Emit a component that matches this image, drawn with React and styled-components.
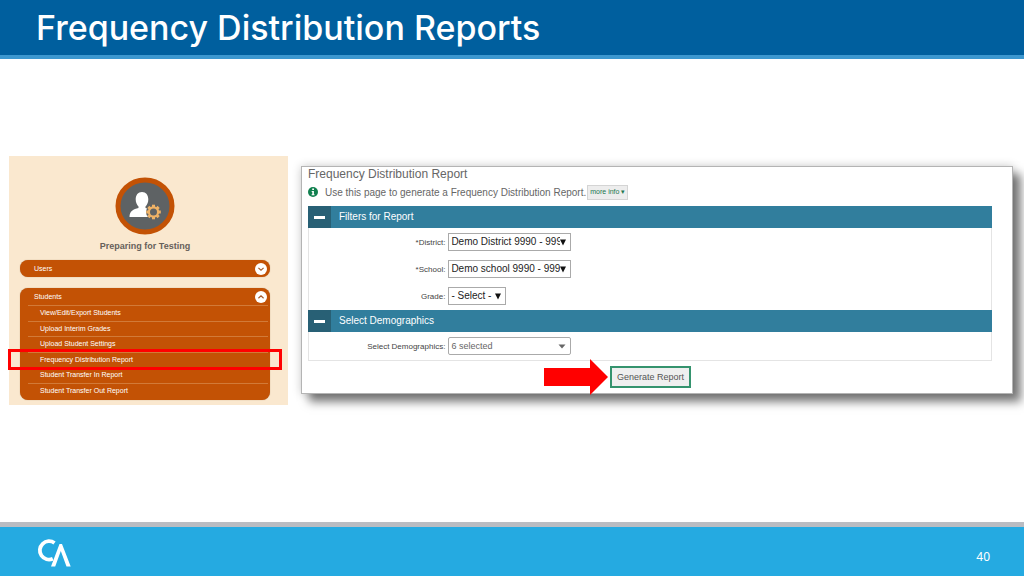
import {useState} from 'react'
import styled, {createGlobalStyle} from 'styled-components'

const GlobalStyle = createGlobalStyle`
  * {
    box-sizing: border-box;
  }
  body {
    margin: 0;
    background-color: #fff;
    font-family: "Liberation Sans", Arial, sans-serif;
  }
`
const Slide = styled.div`
  display: flex;
  flex-direction: column;
  min-height: 100vh;
  overflow: hidden;
`
const Header = styled.header`
  display: flex;
  align-items: center;
  height: 59px;
  padding: 0 36px;
  background-color: #005f9e;
  border-bottom: 4px solid #3c97cf;
`
const Heading = styled.h1`
  margin: 0;
  font-family: Inter, sans-serif;
  font-size: 34px;
  font-weight: 500;
  line-height: 40px;
  color: #fff;
`
const Main = styled.main`
  display: grid;
  grid-template-columns: 279fr 712fr;
  align-items: start;
  gap: 13px;
  flex: 1;
  padding: 97px 11px 0 9px;
`
const Sidebar = styled.nav`
  display: flex;
  flex-direction: column;
  align-items: center;
  padding: 21px 18px 5px 11px;
  background-color: #fae8cf;
`
const Avatar = styled.svg`
  display: block;
  width: 60px;
  height: 58px;
`
const SidebarTitle = styled.h2`
  margin: 5px 0 8px;
  font-size: 9px;
  font-weight: 700;
  line-height: 12px;
  color: #66605a;
`
const Group = styled.section`
  width: 100%;
  margin-bottom: ${(props) => props.$spaced && '11px'};
  border-radius: 8px;
  background-color: #c35205;
  box-shadow: 0 0 1px #a98260;
`
const GroupButton = styled.button`
  display: flex;
  align-items: center;
  justify-content: space-between;
  width: 100%;
  height: 17px;
  padding: 0 3px 0 14px;
  border: none;
  background: none;
  font-family: inherit;
  font-size: 7px;
  color: #fff;
`
const Toggle = styled.svg`
  width: 12px;
  height: 12px;
`
const Items = styled.ul`
  display: grid;
  grid-auto-rows: 1fr;
  min-height: 95px;
  margin: 0;
  padding: 0 2px 2px 8px;
  list-style: none;
`
const Item = styled.li`
  position: relative;
  display: flex;
  align-items: center;
  padding-left: 12px;
  border-top: 1px solid #d27a38;
`
const ItemLink = styled.a`
  font-size: 7px;
  line-height: 12px;
  color: #fff;
  text-decoration: none;
`
const Highlight = styled.span`
  position: absolute;
  inset: -4px -14px -3px -20px;
  border: 3px solid #f00;
  z-index: 1;
  pointer-events: none;
`
const Panel = styled.section`
  margin-top: 10px;
  padding: 0 20px 0 6px;
  border: 1px solid #b4b4b4;
  background-color: #fff;
  box-shadow:
    8px 8px 9px rgba(0, 0, 0, 0.5),
    0 0 9px rgba(0, 0, 0, 0.2);
`
const PanelTitle = styled.h2`
  margin: 0;
  font-size: 12px;
  font-weight: 400;
  line-height: 15px;
  color: #666;
`
const Intro = styled.div`
  display: flex;
  align-items: center;
  height: 20px;
  margin-bottom: 4px;
  font-size: 10px;
  color: #666;
`
const InfoIcon = styled.svg`
  width: 10px;
  height: 10px;
  margin-right: 7px;
`
const MoreInfo = styled.button`
  height: 15px;
  margin-left: 1px;
  padding: 0 2px;
  border: 1px solid #d4d4d4;
  background-color: #ededed;
  font-family: inherit;
  font-size: 7px;
  color: #21774f;
`
const Bar = styled.div`
  display: flex;
  align-items: stretch;
  height: 22px;
  background-color: #317e9d;
`
const Collapse = styled.button`
  display: flex;
  align-items: center;
  justify-content: center;
  width: 23px;
  padding: 0;
  border: none;
  background-color: #286075;
`
const Dash = styled.span`
  width: 11px;
  height: 3px;
  background-color: #fff;
`
const BarTitle = styled.h3`
  margin: 0;
  padding-left: 8px;
  font-size: 10px;
  font-weight: 400;
  line-height: 21px;
  color: #fff;
`
const Fields = styled.div`
  display: grid;
  gap: 9px;
  padding: 5px 0;
  border: solid #e4e4e4;
  border-width: 0 1px ${(props) => props.$last ? '1px' : '0'};
`
const Field = styled.div`
  display: grid;
  grid-template-columns: 20% 1fr;
  align-items: center;
  gap: 3px;
`
const Label = styled.label`
  font-size: 8px;
  text-align: right;
  color: #444;
`
const SelectBox = styled.div`
  display: grid;
  grid-template-columns: 1fr auto;
  align-items: center;
  width: ${(props) => props.$short ? '58px' : '123px'};
  height: 18px;
  padding: 0 4px 0 2px;
  border: 1px solid #aaa;
  border-radius: ${(props) => props.$muted ? '2px' : '0'};
  background-color: #fff;
`
const Select = styled.select`
  appearance: none;
  min-width: 0;
  width: 100%;
  padding: 0;
  border: none;
  background: none;
  font-family: inherit;
  font-size: ${(props) => props.$muted ? '9px' : '10px'};
  line-height: 14px;
  color: ${(props) => props.$muted ? '#666' : '#222'};
`
const Caret = styled.svg`
  width: ${(props) => props.$muted ? '8px' : '6px'};
  height: 7px;
  fill: ${(props) => props.$muted ? '#666' : '#111'};
`
const Actions = styled.div`
  display: flex;
  align-items: center;
  height: 32px;
  padding-left: 34.5%;
`
const Arrow = styled.svg`
  width: 64px;
  height: 36px;
  margin-right: 2px;
`
const Generate = styled.button`
  height: 22px;
  padding: 0 5px;
  border: 2px solid #35936e;
  background-color: #efefef;
  font-family: inherit;
  font-size: 9px;
  color: #555;
`
const Footer = styled.footer`
  display: flex;
  align-items: center;
  justify-content: space-between;
  height: 54px;
  padding: 0 34px 0 37px;
  border-top: 5px solid #b9bcc2;
  background-color: #25aae1;
`
const Logo = styled.svg`
  width: 34px;
  height: 30px;
  margin-top: 2px;
`
const PageNumber = styled.span`
  margin-top: 10px;
  font-family: "Noto Sans", sans-serif;
  font-size: 12px;
  line-height: 16px;
  color: #fff;
`

const links = [
    'View/Edit/Export Students',
    'Upload Interim Grades',
    'Upload Student Settings',
    'Frequency Distribution Report',
    'Student Transfer In Report',
    'Student Transfer Out Report',
]

const GroupHeader = ({title, open, onClick}) => (
    <GroupButton type="button" aria-expanded={open} onClick={onClick}>
        {title}
        <Toggle viewBox="0 0 12 12" aria-hidden="true">
            <circle cx="6" cy="6" r="6" fill="#fff" />
            <path
                d={open ? 'M3.4 7.2 6 4.9l2.6 2.3' : 'M3.4 4.9 6 7.2l2.6-2.3'}
                fill="none"
                stroke="#a65a2a"
                strokeWidth="1.2"
            />
        </Toggle>
    </GroupButton>
)

const SelectField = ({id, label, value, short, muted}) => (
    <Field>
        <Label htmlFor={id}>{label}</Label>
        <SelectBox $short={short} $muted={muted}>
            <Select id={id} $muted={muted}>
                <option>{value}</option>
            </Select>
            <Caret viewBox={muted ? '0 0 8 7' : '0 0 6 7'} $muted={muted} aria-hidden="true">
                <path d={muted ? 'M0.5 1.5h7L4 5.5z' : 'M0 0.5h6L3 6.5z'} />
            </Caret>
        </SelectBox>
    </Field>
)

const SectionBar = ({title}) => (
    <Bar>
        <Collapse type="button" aria-label={`Collapse ${title}`}>
            <Dash />
        </Collapse>
        <BarTitle>{title}</BarTitle>
    </Bar>
)

const teeth = [0, 45, 90, 135, 180, 225, 270, 315]

const App = () => {
    const [usersOpen, setUsersOpen] = useState(false)
    const [studentsOpen, setStudentsOpen] = useState(true)

    return (
        <Slide>
            <GlobalStyle />
            <Header>
                <Heading>Frequency Distribution Reports</Heading>
            </Header>
            <Main>
                <Sidebar>
                    <Avatar viewBox="0 0 60 58" aria-hidden="true">
                        <ellipse cx="30" cy="29" rx="27" ry="26" fill="#5e6264" stroke="#c35205" strokeWidth="5" />
                        <path
                            d="M27 15c4 0 6.3 3 6.3 7.5 0 3-1.3 5.5-2.8 7v1.5c4.5 1 7.5 3 8 9H14.5c0-6 4-8 9-9v-1.5c-1.500-1.500-2.800-4-2.800-7C20.700 18 23 15 27 15z"
                            fill="#fff"
                        />
                        <circle cx="38.5" cy="35" r="7.5" fill="#5e6264" />
                        <g fill="#efb266">
                            {teeth.map((angle) => (
                                <rect key={angle} x="37" y="27.7" width="3" height="3" transform={`rotate(${angle} 38.5 35)`} />
                            ))}
                        </g>
                        <circle cx="38.5" cy="35" r="4.6" fill="none" stroke="#efb266" strokeWidth="2.2" />
                    </Avatar>
                    <SidebarTitle>Preparing for Testing</SidebarTitle>
                    <Group $spaced>
                        <GroupHeader title="Users" open={usersOpen} onClick={() => setUsersOpen(!usersOpen)} />
                    </Group>
                    <Group>
                        <GroupHeader title="Students" open={studentsOpen} onClick={() => setStudentsOpen(!studentsOpen)} />
                        {studentsOpen && (
                            <Items>
                                {links.map((link) => (
                                    <Item key={link}>
                                        <ItemLink href="#">{link}</ItemLink>
                                        {link === 'Frequency Distribution Report' && <Highlight />}
                                    </Item>
                                ))}
                            </Items>
                        )}
                    </Group>
                </Sidebar>
                <Panel>
                    <PanelTitle>Frequency Distribution Report</PanelTitle>
                    <Intro>
                        <InfoIcon viewBox="0 0 10 10" aria-hidden="true">
                            <circle cx="5" cy="5" r="5" fill="#11804f" />
                            <path d="M4.2 1.5h1.800v1.500H4.200zM3.700 4h2.200v3.200h.6v1H3.600v-1h.7V5h-.6z" fill="#fff" />
                        </InfoIcon>
                        Use this page to generate a Frequency Distribution Report.
                        <MoreInfo type="button">more info ▾</MoreInfo>
                    </Intro>
                    <SectionBar title="Filters for Report" />
                    <Fields>
                        <SelectField id="district" label="*District:" value="Demo District 9990 - 999" />
                        <SelectField id="school" label="*School:" value="Demo school 9990 - 9990" />
                        <SelectField id="grade" label="Grade:" value="- Select -" short />
                    </Fields>
                    <SectionBar title="Select Demographics" />
                    <Fields $last>
                        <SelectField id="demographics" label="Select Demographics:" value="6 selected" muted />
                    </Fields>
                    <Actions>
                        <Arrow viewBox="0 0 64 36" aria-hidden="true">
                            <path d="M0 9h46V0l18 18-18 18v-9H0z" fill="#f00" />
                        </Arrow>
                        <Generate type="button">Generate Report</Generate>
                    </Actions>
                </Panel>
            </Main>
            <Footer>
                <Logo viewBox="0 0 34 30" role="img" aria-label="CA">
                    <path d="M17.5 5A9.2 9.2 0 1 0 15.8 20.8" fill="none" stroke="#fff" strokeWidth="3.8" />
                    <path d="M14 28.5 22.5 6H25l8.7 22.5h-4.200L23.800 13l-5.600 15.500z" fill="#fff" />
                </Logo>
                <PageNumber>40</PageNumber>
            </Footer>
        </Slide>
    )
}

export default App
